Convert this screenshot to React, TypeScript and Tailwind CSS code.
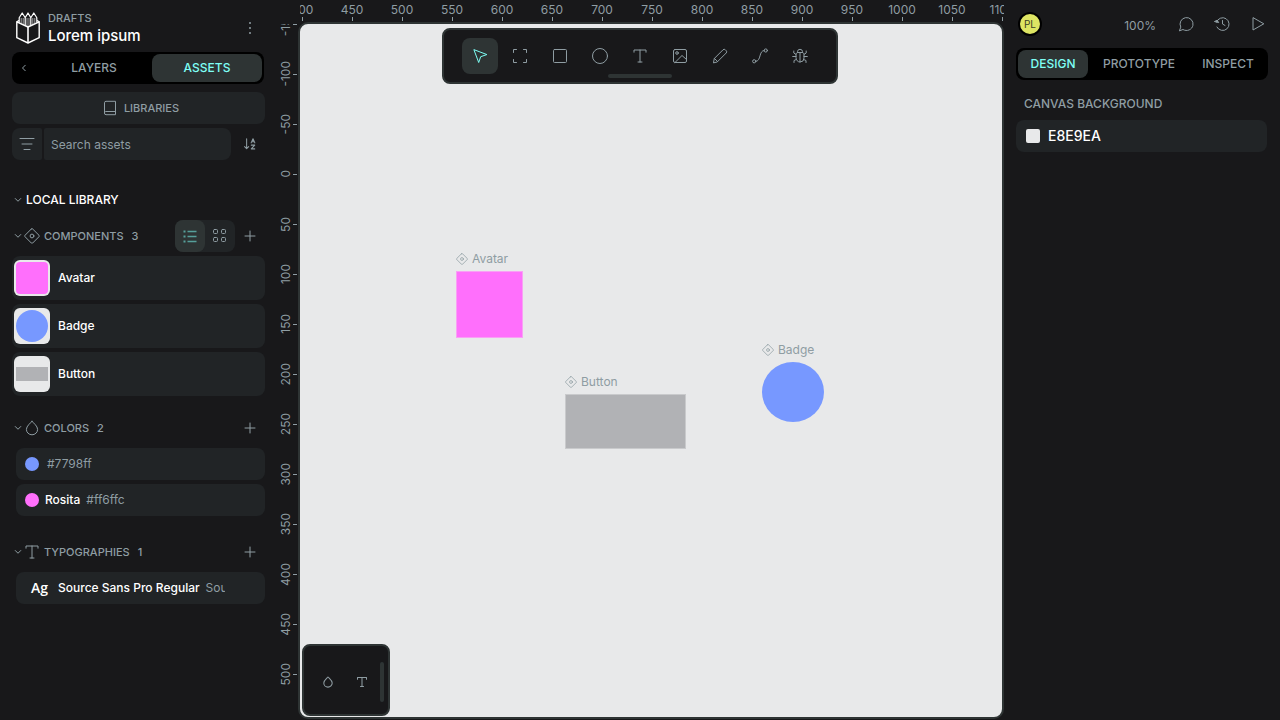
import type { ReactNode } from "react";

type IconProps = { className?: string; children: ReactNode };

function Icon({ className = "size-4", children }: IconProps) {
  return (
    <svg
      viewBox="0 0 16 16"
      className={className}
      fill="none"
      stroke="currentColor"
      strokeLinecap="round"
      strokeLinejoin="round"
      aria-hidden="true"
    >
      {children}
    </svg>
  );
}

const componentShape = (
  <>
    <path d="M7.3 1 1 7.3a1 1 0 0 0 0 1.4L7.3 15a1 1 0 0 0 1.4 0L15 8.7a1 1 0 0 0 0-1.4L8.7 1a1 1 0 0 0-1.4 0Z" />
    <circle cx="8" cy="8" r="1.9" />
  </>
);
const dropShape = <path d="M8 1.3C6.5 3.2 2.4 6 2.4 9.4a5.6 5.4 0 0 0 11.2 0C13.6 6 9.500 3.200 8 1.300Z" />;
const textShape = <path d="M2 4.200V2h12v2.200M8 2v12M6 14h4" />;
const chevronDown = <path d="m2.500 5 5.500 5.500L13.500 5" strokeWidth="2" />;

function Logo() {
  return (
    <svg viewBox="0 0 24 32" className="h-8 w-6 shrink-0 text-white" fill="none" stroke="currentColor" strokeLinejoin="round" aria-hidden="true">
      <path d="M.8 9.800v15.900L12 31l11.200-5.300V9.800L12 15Z" strokeWidth="1.400" />
      <path d="M12 15v16" strokeWidth="1.600" />
      <path d="M3.200 10.800V5.800L6.200 1l3 4.800v7.800M9.200 5.800 12 1l2.800 4.800M14.800 13.600V5.800l3-4.800 3 4.800v5M.8 9.800l2.400-1.500M23.200 9.800l-2.400-1.500" strokeWidth="1.200" />
      <path d="M5.200 6v5.800M7.200 6v6.700M11 6v8.500M13 6v8.500M16.800 6v6.700M18.800 6v5.800" strokeWidth=".8" opacity=".75" />
    </svg>
  );
}

function AddButton({ label }: { label: string }) {
  return (
    <button type="button" aria-label={label} className="flex h-8 w-[30px] items-center justify-center">
      <Icon className="size-4">
        <path d="M8 3v10M3 8h10" />
      </Icon>
    </button>
  );
}

function SectionTitle({ icon, title, count, children }: { icon: ReactNode; title: string; count: number; children: ReactNode }) {
  return (
    <div className="flex h-8 items-center">
      <button type="button" className="flex flex-1 items-center text-[11px] font-medium">
        <span className="flex w-3 justify-center"><Icon className="size-2">{chevronDown}</Icon></span>
        <span className="mr-1 flex w-4 justify-center">{icon}</span>
        {title}
        <span className="ml-2">{count}</span>
      </button>
      {children}
    </div>
  );
}

function ComponentRow({ name, children }: { name: string; children: ReactNode }) {
  return (
    <li className="flex h-11 items-center gap-2 rounded-lg bg-[#212426] pl-0.5 text-xs font-medium text-white">
      <span className="flex size-9 items-center justify-center overflow-hidden rounded-md bg-[#e8e9ea] p-0.5">{children}</span>
      {name}
    </li>
  );
}

function LibraryPanel() {
  return (
    <aside className="w-[278px] shrink-0 overflow-hidden pt-3 pr-[13px] pl-3">
      <header className="flex h-8 items-center pl-1">
        <Logo />
        <div className="ml-2 flex-1">
          <div className="text-[11px] leading-4 font-medium">DRAFTS</div>
          <div className="text-[15px] leading-5 font-medium text-white">Lorem ipsum</div>
        </div>
        <button type="button" aria-label="File menu" className="flex w-[30px] justify-center">
          <Icon>
            <g fill="currentColor" stroke="none">
              <circle cx="8" cy="3" r="1" /><circle cx="8" cy="8" r="1" /><circle cx="8" cy="13" r="1" />
            </g>
          </Icon>
        </button>
      </header>

      <div className="mt-2 mr-px flex h-8 items-center rounded-lg bg-black p-0.5 text-xs font-medium">
        <button type="button" aria-label="Collapse panel" className="flex w-5 justify-center">
          <Icon className="size-2"><path d="m10.500 2.500-5.500 5.500 5.500 5.500" strokeWidth="2" /></Icon>
        </button>
        <div role="tablist" className="ml-2 grid h-full flex-1 grid-cols-2">
          <button type="button" role="tab" aria-selected="false" className="pr-1.5">LAYERS</button>
          <button type="button" role="tab" aria-selected="true" className="rounded-lg bg-[#2e3434] text-[#7efff5]">ASSETS</button>
        </div>
      </div>

      <button type="button" className="mt-2 flex h-8 w-full items-center justify-center gap-1.5 rounded-lg bg-[#212426] pl-1 text-[11px] font-medium">
        <Icon><path d="M2.500 12.900V2.800a1.500 1.500 0 0 1 1.500-1.500h9.500v13.400H4a1.600 1.600 0 0 1-1.500-1.800c0-.8.700-1.400 1.500-1.400h9.500" /></Icon>
        LIBRARIES
      </button>

      <div className="mt-1 flex h-8 items-center gap-0.5">
        <button type="button" aria-label="Filter" className="flex h-8 w-[30px] items-center justify-center rounded-l-lg rounded-r-xs bg-[#212426]">
          <Icon className="size-4"><path d="M1 2.500h14M3 8h10M5 13.500h6" /></Icon>
        </button>
        <input aria-label="Search assets" placeholder="Search assets" className="mr-0.5 h-8 min-w-0 flex-1 rounded-l-xs rounded-r-lg bg-[#212426] px-[7px] text-xs text-white placeholder:text-[#8f9da3] focus:outline-none" />
        <button type="button" aria-label="Sort" className="flex h-8 w-[30px] items-center justify-center">
          <Icon className="size-3">
            <path d="M3.500 1v13M.8 11.500l2.700 2.800 2.700-2.800M9.500 6.500 12 1l2.500 5.500M10.300 5h3.400M9.700 9.500h4.600l-4.600 5h4.600" strokeWidth="1.400" />
          </Icon>
        </button>
      </div>

      <button type="button" className="mt-6 flex h-8 w-full items-center text-xs font-medium text-white">
        <span className="mr-0.5 flex w-3 justify-center text-[#8f9da3]"><Icon className="size-2">{chevronDown}</Icon></span>
        LOCAL LIBRARY
      </button>

      <section className="mt-1">
        <SectionTitle icon={<Icon>{componentShape}</Icon>} title="COMPONENTS" count={3}>
          <div className="flex rounded-lg bg-[#212426]">
            <button type="button" aria-label="List view" aria-pressed="true" className="flex h-8 w-[30px] items-center justify-center rounded-lg bg-[#2e3434] text-[#569f9a]">
              <Icon><path d="M5.500 3.500h9M5.500 8.500h9M5.500 13.500h9" strokeWidth="1.500" strokeLinecap="butt" /><path d="M1.500 3.500h2M1.500 8.500h2M1.500 13.500h2" strokeWidth="2" strokeLinecap="butt" /></Icon>
            </button>
            <button type="button" aria-label="Grid view" aria-pressed="false" className="flex h-8 w-[30px] items-center justify-center">
              <Icon><rect x="1.500" y="1.500" width="4" height="4" rx="1" /><rect x="9.500" y="1.500" width="4" height="4" rx="1" /><rect x="1.500" y="9.500" width="4" height="4" rx="1" /><rect x="9.500" y="9.500" width="4" height="4" rx="1" /></Icon>
            </button>
          </div>
          <AddButton label="Add component" />
        </SectionTitle>
        <ul className="mt-1 flex flex-col gap-1">
          <ComponentRow name="Avatar"><span className="size-full rounded-sm bg-[#ff6ffc]" /></ComponentRow>
          <ComponentRow name="Badge"><span className="size-full rounded-full bg-[#7798ff]" /></ComponentRow>
          <ComponentRow name="Button"><span className="h-3.5 w-full bg-[#b1b2b5]" /></ComponentRow>
        </ul>
      </section>

      <section className="mt-4">
        <SectionTitle icon={<Icon>{dropShape}</Icon>} title="COLORS" count={2}>
          <AddButton label="Add color" />
        </SectionTitle>
        <ul className="mt-1 ml-1 flex flex-col gap-1 text-xs">
          <li className="flex h-8 items-center rounded-lg bg-[#212426] pl-[9px]">
            <span className="mr-2 size-3.5 rounded-full bg-[#7798ff]" />
            #7798ff
          </li>
          <li className="flex h-8 items-center gap-1.5 rounded-lg bg-[#212426] pl-[9px]">
            <span className="size-3.5 rounded-full bg-[#ff6ffc]" />
            <span className="font-medium text-white">Rosita</span>
            #ff6ffc
          </li>
        </ul>
      </section>

      <section className="mt-5">
        <SectionTitle icon={<Icon>{textShape}</Icon>} title="TYPOGRAPHIES" count={1}>
          <AddButton label="Add typography" />
        </SectionTitle>
        <div className="mt-1 ml-1 flex h-8 items-center rounded-lg bg-[#212426] pr-10 pl-[15px] text-xs">
          <span className="w-[27px] shrink-0 font-['Open_Sans',sans-serif] text-sm font-semibold text-white">Ag</span>
          <span className="flex min-w-0 gap-1.5 overflow-hidden whitespace-nowrap">
            <span className="font-medium text-white">Source Sans Pro Regular</span>
            <span>Source Sans Pro</span>
          </span>
        </div>
      </section>
    </aside>
  );
}

const horizontalMarks = Array.from({ length: 15 }, (_, i) => 400 + i * 50);
const verticalMarks = Array.from({ length: 14 }, (_, i) => -150 + i * 50);

const tools = [
  { label: "Move", icon: <path d="m2 2 4.700 12.500 2-5.800 5.800-2Z" /> },
  { label: "Board", icon: <path d="M1.500 4.500v-3h3M11.500 1.500h3v3M14.500 11.500v3h-3M4.500 14.500h-3v-3" /> },
  { label: "Rectangle", icon: <rect x="1.500" y="1.500" width="13" height="13" rx="1" /> },
  { label: "Ellipse", icon: <circle cx="8" cy="8" r="7.500" /> },
  { label: "Text", icon: textShape },
  { label: "Image", icon: <><rect x="1.500" y="1.500" width="13" height="13" rx="1.500" /><circle cx="5" cy="5" r="1.300" /><path d="m3 14.500 7-7 4.500 4" /></> },
  { label: "Curve", icon: <path d="m1.500 14.500.8-4L11 1.800a1.600 1.600 0 0 1 2.300 0l.9.900a1.600 1.600 0 0 1 0 2.300l-8.700 8.700ZM2.500 10.500l3 3" /> },
  { label: "Path", icon: <><circle cx="2.200" cy="13.300" r="1.600" /><circle cx="13.800" cy="2.500" r="1.600" /><path d="M3.800 13.300C9.500 13.300 6.500 2.500 12.200 2.500" /></> },
  { label: "Debug", icon: <><path d="M4 6.500C4 5.200 4.800 4.500 6 4.500h4c1.200 0 2 .7 2 2V10a4 4 0 0 1-8 0ZM5.500 4.500V3.800a2.500 2.500 0 0 1 5 0v.7M8 4.500V14" /><path d="M4 8.500H.7M15.300 8.500H12M4 6.500 1.800 5V3M12 6.500 14.200 5V3M4.300 11.500 2 12.500v2M11.700 11.500l2.300 1v2" /></> },
];

function BoardLabel({ name }: { name: string }) {
  return (
    <div className="mb-1 flex h-4 items-center gap-1 text-xs">
      <Icon className="size-3 shrink-0">{componentShape}</Icon>
      {name}
    </div>
  );
}

function Viewport() {
  return (
    <main className="grid min-w-0 flex-1 grid-cols-[20px_minmax(0,1fr)] grid-rows-[22px_minmax(0,1fr)] text-xs">
      <div className="col-start-2 ml-0.5 overflow-hidden">
        <div className="-ml-[23px] flex h-full">
          {horizontalMarks.map((n) => (
            <div key={n} className="flex w-[50px] shrink-0 flex-col items-center justify-end">
              <span className="leading-[14px]">{n}</span>
              <span className="mb-px h-1 w-px bg-[#8f9da3]" />
            </div>
          ))}
        </div>
      </div>
      <div className="mt-0.5 overflow-hidden">
        <div className="-mt-[25px] flex w-full flex-col">
          {verticalMarks.map((n) => (
            <div key={n} className="flex h-[50px] shrink-0 items-center justify-end">
              <span className="rotate-180 leading-[14px] [writing-mode:vertical-rl]">{n}</span>
              <span className="mr-px h-px w-1 bg-[#8f9da3]" />
            </div>
          ))}
        </div>
      </div>
      <div className="relative mb-px overflow-hidden rounded-[10px] border-2 border-[#2e3434] bg-[#e8e9ea]">
        <div className="absolute top-[227px] left-[156px]">
          <BoardLabel name="Avatar" />
          <div className="size-[67px] border border-[#f9a0f5] bg-[#ff6ffc]" />
        </div>
        <div className="absolute top-[350px] left-[265px]">
          <BoardLabel name="Button" />
          <div className="h-[55px] w-[121px] border border-[#c9cacc] bg-[#b1b2b5]" />
        </div>
        <div className="absolute top-[318px] left-[462px]">
          <BoardLabel name="Badge" />
          <div className="h-[60px] w-[62px] rounded-[50%] bg-[#7798ff]" />
        </div>

        <div role="toolbar" aria-label="Tools" className="absolute top-1 left-[142px] flex gap-1 rounded-lg border-2 border-[#2e3434] bg-[#18181a] px-[18px] py-2">
          {tools.map((tool, i) => (
            <button
              key={tool.label}
              type="button"
              aria-label={tool.label}
              className={i === 0 ? "flex size-9 items-center justify-center rounded-lg bg-[#2e3434] text-[#7efff5]" : "flex size-9 items-center justify-center rounded-lg"}
            >
              <Icon>{tool.icon}</Icon>
            </button>
          ))}
          <span className="absolute bottom-1 left-1/2 h-1 w-16 -translate-x-1/2 rounded-sm bg-[#2e3434]" />
        </div>

        <div className="absolute bottom-px left-0.5 flex h-[72px] w-[88px] items-center rounded-lg border-2 border-[#2e3434] bg-[#18181a] pr-1 pl-[18px]">
          <button type="button" aria-label="Color palette" className="mt-1"><Icon className="size-3 stroke-[1.4]">{dropShape}</Icon></button>
          <button type="button" aria-label="Typography palette" className="mt-1 ml-[22px]"><Icon className="size-3 stroke-[1.4]">{textShape}</Icon></button>
          <span className="mt-1 ml-auto h-10 w-1 rounded-sm bg-[#2e3434]" />
        </div>
      </div>
    </main>
  );
}

function DesignPanel() {
  return (
    <aside className="w-[276px] shrink-0 px-3 pt-2">
      <header className="flex h-8 items-center">
        <div className="ml-0.5 flex size-6 items-center justify-center rounded-full border-2 border-black bg-[#dee563] text-[10px] text-[#3d4025]">PL</div>
        <button type="button" className="mt-1 ml-auto text-xs">100%</button>
        <button type="button" aria-label="Comments" className="ml-[22px]">
          <Icon><path d="m1.500 14.500 1.300-3.400a6.500 6.500 0 1 1 2.500 2.600Z" /></Icon>
        </button>
        <button type="button" aria-label="History" className="ml-5">
          <Icon><path d="M2.500 6.200a6.400 6.400 0 1 1 .4 4.800M8.500 4.500V8l2.500 1.500" /><path d="M.8 5.600 4.700 6.600 3.400 4.600Z" fill="currentColor" /></Icon>
        </button>
        <button type="button" aria-label="Play" className="mr-0.5 ml-5">
          <Icon><path d="M3 2v12l10.500-6Z" /></Icon>
        </button>
      </header>
      <div role="tablist" className="mt-2 grid h-8 grid-cols-[70fr_102fr_76fr] rounded-lg bg-black p-0.5 text-xs font-medium">
        <button type="button" role="tab" aria-selected="true" className="rounded-lg bg-[#2e3434] text-[#7efff5]">DESIGN</button>
        <button type="button" role="tab" aria-selected="false">PROTOTYPE</button>
        <button type="button" role="tab" aria-selected="false">INSPECT</button>
      </div>
      <h2 className="mt-2 flex h-8 items-center pl-2 text-xs font-medium">CANVAS BACKGROUND</h2>
      <div className="mr-px flex h-8 items-center gap-2 rounded-lg bg-[#212426] pl-2.5">
        <span className="size-3.5 rounded-xs bg-[#e8e9ea]" />
        <input aria-label="Canvas background" defaultValue="E8E9EA" className="min-w-0 flex-1 bg-transparent text-sm font-medium text-white focus:outline-none" />
      </div>
    </aside>
  );
}

export default function App() {
  return (
    <div className="flex h-screen overflow-hidden bg-[#18181a] font-['Inter',sans-serif] text-[#8f9da3]">
      <LibraryPanel />
      <Viewport />
      <DesignPanel />
    </div>
  );
}
